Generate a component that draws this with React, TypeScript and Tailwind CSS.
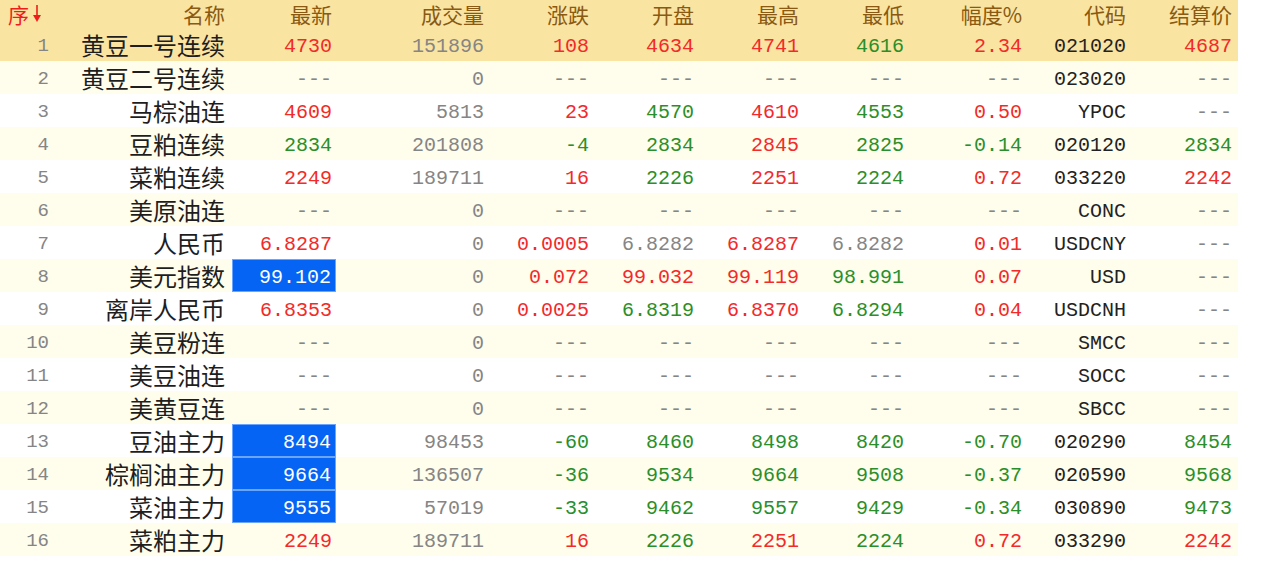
import React from 'react';

type C = 'r' | 'g' | 'n' | 'k' | 'b';

interface Row {
  name: string;
  last: [string, C];
  vol: string;
  chg: [string, C];
  open: [string, C];
  high: [string, C];
  low: [string, C];
  pct: [string, C];
  code: string;
  settle: [string, C];
}

const D: [string, C] = ['---', 'n'];

const rows: Row[] = [
  { name: '黄豆一号连续', last: ['4730', 'r'], vol: '151896', chg: ['108', 'r'], open: ['4634', 'r'], high: ['4741', 'r'], low: ['4616', 'g'], pct: ['2.34', 'r'], code: '021020', settle: ['4687', 'r'] },
  { name: '黄豆二号连续', last: D, vol: '0', chg: D, open: D, high: D, low: D, pct: D, code: '023020', settle: D },
  { name: '马棕油连', last: ['4609', 'r'], vol: '5813', chg: ['23', 'r'], open: ['4570', 'g'], high: ['4610', 'r'], low: ['4553', 'g'], pct: ['0.50', 'r'], code: 'YPOC', settle: D },
  { name: '豆粕连续', last: ['2834', 'g'], vol: '201808', chg: ['-4', 'g'], open: ['2834', 'g'], high: ['2845', 'r'], low: ['2825', 'g'], pct: ['-0.14', 'g'], code: '020120', settle: ['2834', 'g'] },
  { name: '菜粕连续', last: ['2249', 'r'], vol: '189711', chg: ['16', 'r'], open: ['2226', 'g'], high: ['2251', 'r'], low: ['2224', 'g'], pct: ['0.72', 'r'], code: '033220', settle: ['2242', 'r'] },
  { name: '美原油连', last: D, vol: '0', chg: D, open: D, high: D, low: D, pct: D, code: 'CONC', settle: D },
  { name: '人民币', last: ['6.8287', 'r'], vol: '0', chg: ['0.0005', 'r'], open: ['6.8282', 'n'], high: ['6.8287', 'r'], low: ['6.8282', 'n'], pct: ['0.01', 'r'], code: 'USDCNY', settle: D },
  { name: '美元指数', last: ['99.102', 'b'], vol: '0', chg: ['0.072', 'r'], open: ['99.032', 'r'], high: ['99.119', 'r'], low: ['98.991', 'g'], pct: ['0.07', 'r'], code: 'USD', settle: D },
  { name: '离岸人民币', last: ['6.8353', 'r'], vol: '0', chg: ['0.0025', 'r'], open: ['6.8319', 'g'], high: ['6.8370', 'r'], low: ['6.8294', 'g'], pct: ['0.04', 'r'], code: 'USDCNH', settle: D },
  { name: '美豆粉连', last: D, vol: '0', chg: D, open: D, high: D, low: D, pct: D, code: 'SMCC', settle: D },
  { name: '美豆油连', last: D, vol: '0', chg: D, open: D, high: D, low: D, pct: D, code: 'SOCC', settle: D },
  { name: '美黄豆连', last: D, vol: '0', chg: D, open: D, high: D, low: D, pct: D, code: 'SBCC', settle: D },
  { name: '豆油主力', last: ['8494', 'b'], vol: '98453', chg: ['-60', 'g'], open: ['8460', 'g'], high: ['8498', 'g'], low: ['8420', 'g'], pct: ['-0.70', 'g'], code: '020290', settle: ['8454', 'g'] },
  { name: '棕榈油主力', last: ['9664', 'b'], vol: '136507', chg: ['-36', 'g'], open: ['9534', 'g'], high: ['9664', 'g'], low: ['9508', 'g'], pct: ['-0.37', 'g'], code: '020590', settle: ['9568', 'g'] },
  { name: '菜油主力', last: ['9555', 'b'], vol: '57019', chg: ['-33', 'g'], open: ['9462', 'g'], high: ['9557', 'g'], low: ['9429', 'g'], pct: ['-0.34', 'g'], code: '030890', settle: ['9473', 'g'] },
  { name: '菜粕主力', last: ['2249', 'r'], vol: '189711', chg: ['16', 'r'], open: ['2226', 'g'], high: ['2251', 'r'], low: ['2224', 'g'], pct: ['0.72', 'r'], code: '033290', settle: ['2242', 'r'] },
];

const color: Record<C, string> = {
  r: 'text-[#f22a2a]',
  g: 'text-[#2a8f2a]',
  n: 'text-[#858585]',
  k: 'text-[#222222]',
  b: 'text-white',
};

const grid = 'grid grid-cols-[55px_177px_104px_152px_105px_105px_105px_105px_118px_104px_108px]';
const mono = "font-['Liberation_Mono',monospace] text-[20px] leading-[20px] pt-[4px]";
const cjk = "font-['Noto_Sans_CJK_SC',sans-serif]";

const Num = ({ v, pr = 'pr-[4px]' }: { v: [string, C]; pr?: string }) => (
  <div className={`flex items-center justify-end ${pr} ${mono} ${color[v[1]]}`}>{v[0]}</div>
);

const headers = ['名称', '最新', '成交量', '涨跌', '开盘', '最高', '最低', '幅度%', '代码', '结算价'];

export default function App() {
  return (
    <div className="w-[1264px] h-[570px] bg-white overflow-hidden">
      <div className="w-[1238px]">
        {/* header */}
        <div className={`${grid} h-[28px] bg-[#f9e4a2]`}>
          <div className={`flex items-center pl-[8px] gap-[3px] ${cjk} text-[21px] leading-[28px] text-[#f01c1c]`}>
            序
            <svg width="10" height="18" viewBox="0 0 10 18">
              <line x1="5" y1="0" x2="5" y2="12" stroke="#f01c1c" strokeWidth="1.6" />
              <polygon points="1,10 9,10 5,17" fill="#f01c1c" />
            </svg>
          </div>
          {headers.map((h, i) => (
            <div
              key={h}
              className={`flex items-center justify-end ${cjk} text-[21px] leading-[28px] text-[#8a5a12] ${i === 0 ? 'pr-[7px]' : i === 9 ? 'pr-[6px]' : 'pr-[4px]'}`}
            >
              {h}
            </div>
          ))}
        </div>

        {/* rows */}
        {rows.map((r, i) => {
          const n = i + 1;
          const bg = n === 1 ? 'bg-[#f9e4a2]' : n % 2 === 0 ? 'bg-[#fffdec]' : 'bg-white';
          const blue = r.last[1] === 'b';
          return (
            <div key={n} className={`${grid} h-[33px] ${bg}`}>
              <div className="flex items-center justify-end pr-[6px] pt-[4px] font-['Liberation_Mono',monospace] text-[19px] leading-[19px] text-[#858585]">
                {n}
              </div>
              <div className={`flex items-center justify-end pr-[7px] ${cjk} text-[24px] leading-[33px] text-[#1e1e1e]`}>{r.name}</div>
              {blue ? (
                <div className={`flex items-center justify-end pr-[4px] bg-[#0564f4] border border-[#6aa6ff] ${mono} text-white`}>
                  {r.last[0]}
                </div>
              ) : (
                <Num v={r.last} />
              )}
              <Num v={[r.vol, 'n']} />
              <Num v={r.chg} />
              <Num v={r.open} />
              <Num v={r.high} />
              <Num v={r.low} />
              <Num v={r.pct} />
              <Num v={[r.code, 'k']} />
              <Num v={r.settle} pr="pr-[6px]" />
            </div>
          );
        })}
      </div>
    </div>
  );
}
